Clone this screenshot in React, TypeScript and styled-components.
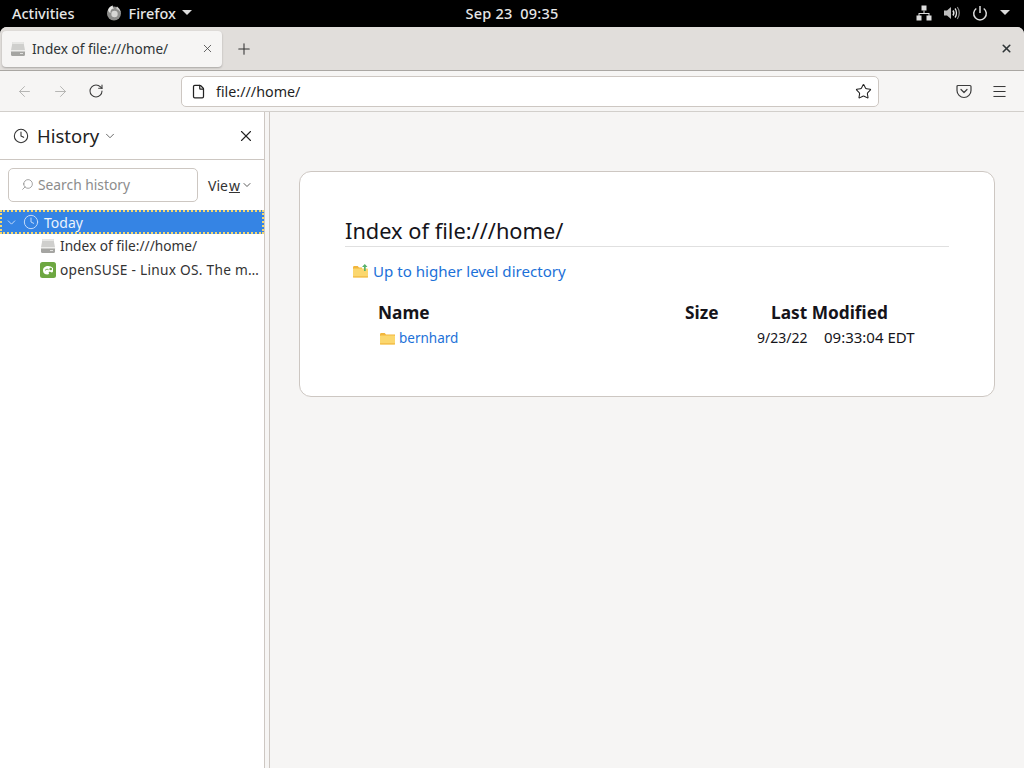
import styled, { createGlobalStyle } from "styled-components";
import {
  ArrowLeft,
  ArrowRight,
  ChevronDown,
  Clock,
  File,
  Menu,
  Plus,
  RotateCw,
  Search,
  Star,
  X,
} from "lucide-react";

const GlobalStyle = createGlobalStyle`
  html, body {
    margin: 0;
    padding: 0;
    background: #000;
  }
  body {
    font-family: "Noto Sans", "Liberation Sans", sans-serif;
    overflow: hidden;
  }
  svg {
    flex: none;
  }
`;

const DriveIcon = () => (
  <svg width="16" height="16" viewBox="0 0 16 16">
    <path d="M2.500 1h11l1.500 8.500H1z" fill="#cfcfcd" />
    <path d="M2.500 1h11l.4 2H2.100z" fill="#e6e6e4" />
    <rect x="1" y="9" width="14" height="6" rx="1.500" fill="#a5a5a2" />
    <rect x="1" y="9" width="14" height="1.500" fill="#ededeb" />
    <rect x="10" y="12" width="3" height="1" fill="#e2e2e0" />
  </svg>
);

const SuseIcon = () => (
  <svg width="16" height="16" viewBox="0 0 16 16">
    <rect width="16" height="16" rx="2.500" fill="#6da741" />
    <path
      d="M3 8.500C3 5.600 5.400 4 8 4c2 0 3.600.7 5 2v3.200c0 .8-.6 1.200-1.200 1.200-1 0-1.400-.7-2.200-.7-.7 0-.9.5-.9 1 0 .4.2.8.5 1-.5.5-1 .8-1.700.8C4.800 12.500 3 10.900 3 8.500z"
      fill="#fff"
    />
    <circle cx="10.700" cy="7" r="1.300" fill="#6da741" />
    <path d="M5 8.500c1-1.300 2.300-1.500 3.500-.8" stroke="#6da741" strokeWidth="1" fill="none" />
  </svg>
);

const FolderIcon = () => (
  <svg width="15" height="13" viewBox="0 0 15 13">
    <path d="M0 2.500C0 1.700.5 1 1.300 1h3.400l1.300 1.500h9V4H0z" fill="#f2b63c" />
    <rect y="3.500" width="15" height="9" rx=".8" fill="#fbd76e" />
    <rect y="11" width="15" height="1.500" fill="#f4c04f" />
  </svg>
);

const FolderUpIcon = () => (
  <svg width="15" height="14" viewBox="0 0 15 14">
    <path d="M0 3.500C0 2.700.5 2 1.300 2h3.400L6 3.500h3V5H0z" fill="#f2b63c" />
    <rect y="4.500" width="15" height="9" rx=".8" fill="#fbd76e" />
    <rect y="12" width="15" height="1.500" fill="#f4c04f" />
    <path d="M11 7V3H9l2.800-3L14.500 3H12.700v4z" fill="#58b26a" />
  </svg>
);

const FirefoxIcon = () => (
  <svg width="16" height="16" viewBox="0 0 16 16">
    <circle cx="8" cy="8.500" r="7" fill="#8e8e8c" />
    <circle cx="8.500" cy="9" r="3.200" fill="#d6d6d4" />
    <path d="M2 5C3 2 5 1 7 .5 6.500 2 7 3 8 3.500 5.500 3.500 4 5.500 4.500 8 3 7.500 2.500 6 2 5z" fill="#e8e8e6" />
    <path d="M11 1.500c2 1.500 3.300 3.500 3.500 6-1-2-2.500-3-4-3.500 0-1 0-1.700.5-2.500z" fill="#cfcfcd" />
  </svg>
);

const NetworkIcon = () => (
  <svg width="16" height="16" viewBox="0 0 16 16" fill="#dcdcdc">
    <rect x="5.500" y="0.500" width="5" height="5" />
    <rect x="0.500" y="10.500" width="5" height="5" />
    <rect x="10.500" y="10.500" width="5" height="5" />
    <path d="M7.500 5.500h1V8H13.500v3h-1V9h-9v2h-1V8h5z" />
  </svg>
);

const VolumeIcon = () => (
  <svg width="16" height="16" viewBox="0 0 16 16" fill="none">
    <path d="M0 5.500h3L7 2v12L3 10.500H0z" fill="#bdbdbd" />
    <path d="M9 5.500c1 1.500 1 3.500 0 5" stroke="#e4e4e4" strokeWidth="1.500" />
    <path d="M11 3.500c2 2.500 2 6.500 0 9" stroke="#e4e4e4" strokeWidth="1.300" />
    <path d="M13.300 2c2.600 3.500 2.600 8.500 0 12" stroke="#8a8a8a" strokeWidth="1.200" />
  </svg>
);

const PowerIcon = () => (
  <svg width="16" height="16" viewBox="0 0 16 16" fill="none" stroke="#dcdcdc" strokeWidth="1.500">
    <path d="M8 1v7" />
    <path d="M4.300 3.500a6.300 6.300 0 1 0 7.400 0" />
  </svg>
);

const PocketIcon = () => (
  <svg width="16" height="16" viewBox="0 0 16 16" fill="none" stroke="#3d3d3d" strokeWidth="1.200">
    <path d="M2 2.500h12c.6 0 1 .4 1 1V7.500A7 7 0 0 1 1 7.500V3.500c0-.6.4-1 1-1z" />
    <path d="M5 6.500l3 3 3-3" strokeLinecap="round" strokeLinejoin="round" />
  </svg>
);

const App = () => {
  return (
    <>
      <GlobalStyle />
      <Screen>
        <TopBar>
          <TopLeft>
            <Activities>Activities</Activities>
            <AppMenu>
              <FirefoxIcon />
              Firefox
              <Caret />
            </AppMenu>
          </TopLeft>
          <TopClock>Sep 23&nbsp;&nbsp;09:35</TopClock>
          <TopRight>
            <NetworkIcon />
            <VolumeIcon />
            <PowerIcon />
            <Caret />
          </TopRight>
        </TopBar>
        <Browser>
          <TabBar>
            <Tab>
              <DriveIcon />
              <TabTitle>Index of file:///home/</TabTitle>
              <X size={13} color="#444" strokeWidth={1.5} />
            </Tab>
            <NewTab>
              <Plus size={18} color="#333" strokeWidth={1.4} />
            </NewTab>
            <WindowClose>
              <X size={13} color="#2e3436" strokeWidth={3} />
            </WindowClose>
          </TabBar>
          <NavBar>
            <NavButtons>
              <ArrowLeft size={17} color="#b5b5b3" strokeWidth={1.4} />
              <ArrowRight size={17} color="#b5b5b3" strokeWidth={1.4} />
              <RotateCw size={16} color="#3b3b3b" strokeWidth={1.6} />
            </NavButtons>
            <UrlBar>
              <File size={15} color="#222" strokeWidth={2} />
              <UrlText>file:///home/</UrlText>
              <Star size={17} color="#222" strokeWidth={1.5} />
            </UrlBar>
            <NavEnd>
              <PocketIcon />
              <Menu size={17} color="#333" strokeWidth={1.4} />
            </NavEnd>
          </NavBar>
          <Body>
            <Sidebar>
              <SidebarHeader>
                <Clock size={16} color="#333" strokeWidth={1.6} />
                <SidebarTitle>History</SidebarTitle>
                <ChevronDown size={14} color="#555" strokeWidth={1.5} />
                <SidebarClose>
                  <X size={18} color="#222" strokeWidth={1.5} />
                </SidebarClose>
              </SidebarHeader>
              <SearchRow>
                <SearchBox>
                  <SearchGlyph>
                    <Search size={13} color="#888" strokeWidth={1.4} />
                  </SearchGlyph>
                  Search history
                </SearchBox>
                <ViewButton>
                  Vie<u>w</u>
                  <ChevronDown size={12} color="#333" strokeWidth={1.6} />
                </ViewButton>
              </SearchRow>
              <TodayRow>
                <ChevronDown size={13} color="#d8e6fa" strokeWidth={1.6} />
                <Clock size={16} color="#cfe1fa" strokeWidth={1.4} />
                Today
              </TodayRow>
              <HistoryRow>
                <DriveIcon />
                <HistoryText>Index of file:///home/</HistoryText>
              </HistoryRow>
              <HistoryRow>
                <SuseIcon />
                <HistoryText $spread>openSUSE - Linux OS. The m…</HistoryText>
              </HistoryRow>
            </Sidebar>
            <Splitter />
            <Content>
              <Card>
                <Heading>Index of file:///home/</Heading>
                <UpLink>
                  <FolderUpIcon />
                  Up to higher level directory
                </UpLink>
                <Table>
                  <NameHead>Name</NameHead>
                  <SizeHead>Size</SizeHead>
                  <ModifiedHead>Last Modified</ModifiedHead>
                  <FileLink>
                    <FolderIcon />
                    bernhard
                  </FileLink>
                  <span />
                  <DateCell>9/23/22</DateCell>
                  <TimeCell>09:33:04 EDT</TimeCell>
                </Table>
              </Card>
            </Content>
          </Body>
        </Browser>
      </Screen>
    </>
  );
};

const Screen = styled.div`
  width: 1024px;
  height: 768px;
  display: flex;
  flex-direction: column;
  background: #000;
  overflow: hidden;
`;

const TopBar = styled.div`
  height: 27px;
  flex: none;
  box-sizing: border-box;
  padding-bottom: 2px;
  display: grid;
  grid-template-columns: 1fr auto 1fr;
  align-items: center;
  color: #e6e6e6;
  font-size: 14.500px;
  font-weight: 500;
`;

const TopLeft = styled.div`
  display: flex;
  align-items: center;
  padding-left: 12px;
  gap: 32px;
`;

const Activities = styled.div``;

const AppMenu = styled.div`
  display: flex;
  align-items: center;
  gap: 6px;
`;

const Caret = styled.span`
  width: 0;
  height: 0;
  border-left: 5px solid transparent;
  border-right: 5px solid transparent;
  border-top: 5px solid #dcdcdc;
`;

const TopClock = styled.div`
  letter-spacing: 0.2px;
`;

const TopRight = styled.div`
  display: flex;
  align-items: center;
  justify-content: flex-end;
  gap: 12px;
  padding-right: 14px;
`;

const Browser = styled.div`
  flex: 1;
  min-height: 0;
  display: flex;
  flex-direction: column;
  border-radius: 7px 7px 0 0;
  overflow: hidden;
  background: #f6f5f4;
`;

const TabBar = styled.div`
  height: 43px;
  flex: none;
  display: flex;
  align-items: center;
  padding-left: 2px;
  background: #e1dedb;
  border-bottom: 1px solid #aaa7a3;
`;

const Tab = styled.div`
  width: 220px;
  height: 36px;
  box-sizing: border-box;
  display: flex;
  align-items: center;
  padding: 0 8px;
  background: #f6f5f4;
  border-radius: 4px;
  box-shadow: 0 1px 2px rgba(0, 0, 0, 0.25);
  color: #2e3436;
  font-size: 13.600px;
`;

const TabTitle = styled.span`
  flex: 1;
  margin-left: 6px;
  white-space: nowrap;
`;

const NewTab = styled.div`
  width: 44px;
  display: flex;
  justify-content: center;
`;

const WindowClose = styled.div`
  margin-left: auto;
  padding-right: 11px;
  display: flex;
`;

const NavBar = styled.div`
  height: 40px;
  flex: none;
  display: flex;
  align-items: center;
  background: #f6f5f4;
  border-bottom: 1px solid #d2cfcb;
`;

const NavButtons = styled.div`
  width: 181px;
  flex: none;
  box-sizing: border-box;
  padding-left: 16px;
  display: flex;
  align-items: center;
  gap: 19px;
`;

const UrlBar = styled.div`
  width: 698px;
  height: 31px;
  flex: none;
  box-sizing: border-box;
  display: flex;
  align-items: center;
  padding: 0 6px 0 9px;
  background: #fff;
  border: 1px solid #cdc7c2;
  border-radius: 5px;
  color: #1f1f1f;
  font-size: 14.300px;
`;

const UrlText = styled.span`
  flex: 1;
  margin-left: 10px;
`;

const NavEnd = styled.div`
  flex: 1;
  display: flex;
  align-items: center;
  justify-content: flex-end;
  gap: 19px;
  padding-right: 16px;
`;

const Body = styled.div`
  flex: 1;
  min-height: 0;
  display: flex;
`;

const Sidebar = styled.div`
  width: 264px;
  flex: none;
  background: #fff;
  color: #2e3436;
`;

const SidebarHeader = styled.div`
  height: 48px;
  box-sizing: border-box;
  display: flex;
  align-items: center;
  padding: 0 9px 0 13px;
  border-bottom: 1px solid #cdc7c2;
`;

const SidebarTitle = styled.span`
  margin: 0 4px 0 8px;
  font-size: 18.500px;
  color: #222;
`;

const SidebarClose = styled.div`
  margin-left: auto;
  display: flex;
`;

const SearchRow = styled.div`
  display: flex;
  align-items: center;
  padding: 8px 0 8px 8px;
`;

const SearchBox = styled.div`
  width: 190px;
  height: 34px;
  box-sizing: border-box;
  display: flex;
  align-items: center;
  padding: 0 0 2px 12px;
  background: #fff;
  border: 1px solid #cdc7c2;
  border-radius: 5px;
  color: #8c8c8c;
  font-size: 13.800px;
`;

const SearchGlyph = styled.span`
  display: flex;
  margin-right: 4px;
  transform: scaleX(-1);
`;

const ViewButton = styled.div`
  display: flex;
  align-items: center;
  margin-left: 10px;
  gap: 1px;
  color: #333;
  font-size: 14px;
`;

const TodayRow = styled.div`
  height: 24px;
  box-sizing: border-box;
  display: flex;
  align-items: center;
  gap: 5px;
  padding-left: 3px;
  background: #3584e4;
  border: 2px dotted #f5d76e;
  color: #eaf2fd;
  font-size: 14px;
`;

const HistoryRow = styled.div`
  height: 24px;
  box-sizing: border-box;
  padding: 0 5px 0 40px;
  display: flex;
  align-items: center;
  gap: 4px;
  font-size: 13.700px;
  line-height: 18px;
  color: #333;
`;

const HistoryText = styled.span<{ $spread?: boolean }>`
  white-space: nowrap;
  letter-spacing: ${(p) => (p.$spread ? "0.27px" : "0")};
`;

const Splitter = styled.div`
  width: 4px;
  flex: none;
  background: #f6f5f4;
  border-left: 1px solid #cdc7c2;
  border-right: 1px solid #cdc7c2;
`;

const Content = styled.div`
  flex: 1;
  padding: 59px 29px 0 29px;
  background: #f6f5f4;
`;

const Card = styled.div`
  width: 696px;
  height: 226px;
  box-sizing: border-box;
  padding: 43px 45px 0;
  background: #fff;
  border: 1px solid #cdc7c2;
  border-radius: 12px;
`;

const Heading = styled.div`
  height: 31px;
  border-bottom: 1px solid #e0e0e0;
  color: #15141a;
  font-size: 21.800px;
  line-height: 32px;
`;

const UpLink = styled.div`
  display: flex;
  align-items: center;
  gap: 5px;
  margin: 12px 0 0 8px;
  color: #1c71d8;
  font-size: 15.100px;
  line-height: 24px;
`;

const Table = styled.div`
  display: grid;
  grid-template-columns: 307px 72px 67px auto;
  margin: 18px 0 0 33px;
  color: #15141a;
  font-size: 14px;
`;

const NameHead = styled.div`
  font-size: 17.300px;
  font-weight: 700;
  line-height: 24px;
`;

const SizeHead = styled(NameHead)``;

const ModifiedHead = styled(NameHead)`
  grid-column: 3 / 5;
  margin-left: 14px;
`;

const FileLink = styled.div`
  display: flex;
  align-items: center;
  gap: 4px;
  margin-top: 1px;
  padding-left: 2px;
  color: #1c71d8;
  font-size: 13.500px;
  line-height: 24px;
`;

const DateCell = styled.div`
  margin-top: 1px;
  line-height: 24px;
`;

const TimeCell = styled.div`
  margin-top: 1px;
  font-size: 15px;
  line-height: 23px;
`;

export default App;
